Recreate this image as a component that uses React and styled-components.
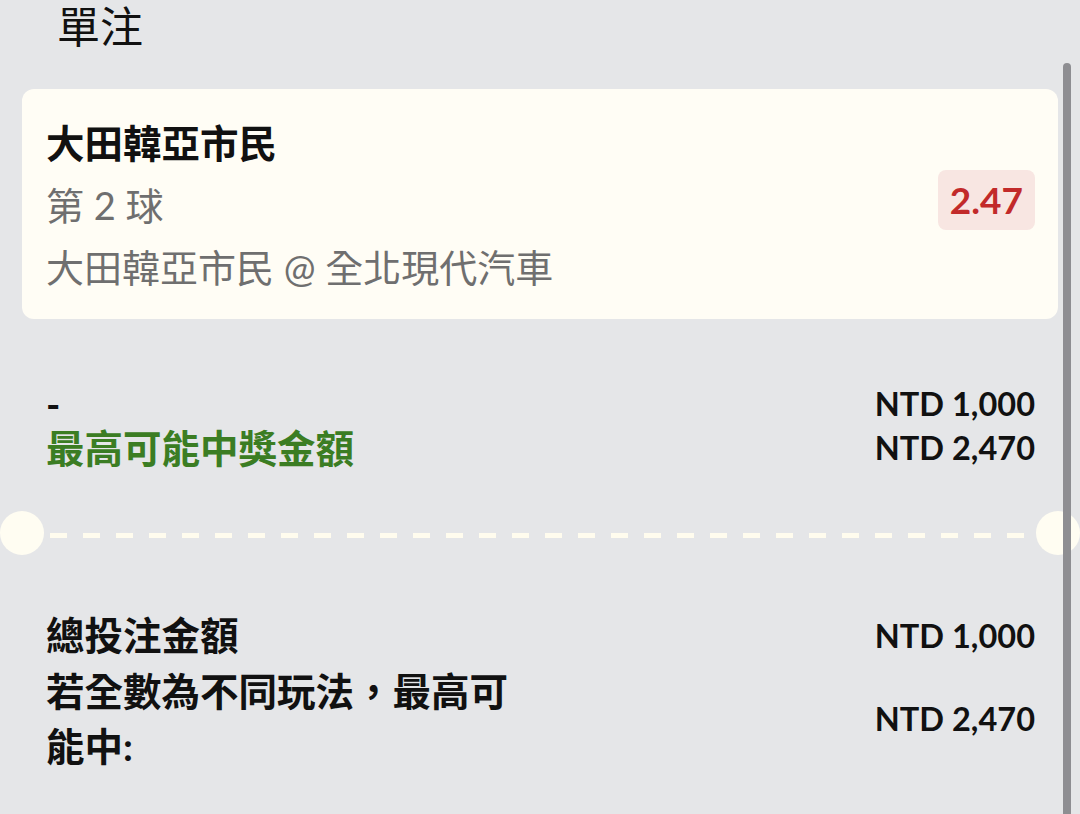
import React from "react";
import styled, { createGlobalStyle } from "styled-components";

const Global = createGlobalStyle`
  html, body { margin: 0; padding: 0; background: #e5e6e8; overflow: hidden; }
  body { font-family: Lato, "Noto Sans CJK TC", sans-serif; }
`;

const Page = styled.div`
  position: relative;
  width: 1080px;
  height: 814px;
  padding: 0 22px;
  box-sizing: border-box;
  background: #e5e6e8;
  overflow: hidden;
`;

const Title = styled.h1`
  margin: 0;
  padding: 0 0 0 35px;
  height: 89px;
  font-family: "Noto Sans CJK TC", sans-serif;
  font-weight: 400;
  font-size: 43px;
  line-height: 48px;
  color: #111;
`;

const Card = styled.div`
  background: #fffdf5;
  border-radius: 12px;
  padding: 23px 23px 21px 24px;
  display: flex;
  align-items: center;
  justify-content: space-between;
`;

const Info = styled.div`
  display: flex;
  flex-direction: column;
`;

const Line = styled.div`
  font-family: Lato, "Noto Sans CJK TC", sans-serif;
  font-size: ${(p) => (p.$bold ? "38.5px" : "38px")};
  line-height: 62px;
  font-weight: ${(p) => (p.$bold ? 700 : 400)};
  color: ${(p) => (p.$muted ? "#6f6f6f" : "#111")};
  white-space: nowrap;
`;

const Odds = styled.div`
  background: #f8e6e2;
  color: #c22a2a;
  border-radius: 8px;
  padding: 0 12px;
  height: 60px;
  display: flex;
  align-items: center;
  font-family: Lato, sans-serif;
  font-weight: 700;
  font-size: 37px;
  margin-bottom: 11px;
`;

const Summary = styled.div`
  display: grid;
  grid-template-columns: 1fr auto;
  align-items: center;
  padding: ${(p) => p.$pad};
  margin: 0 23px 0 24px;
  line-height: ${(p) => p.$lh}px;
`;

const Label = styled.div`
  font-family: Lato, "Noto Sans CJK TC", sans-serif;
  font-size: 38.5px;
  font-weight: 700;
  color: ${(p) => (p.$green ? "#3b7d23" : "#111")};
  max-width: ${(p) => (p.$wrap ? "480px" : "none")};
`;

const Amount = styled.div`
  font-family: Lato, sans-serif;
  font-size: 32.5px;
  font-weight: 700;
  color: #111;
  text-align: right;
  white-space: nowrap;
`;

const Divider = styled.div`
  position: relative;
  height: 44px;
  margin: 41px 0 0;
  &::before,
  &::after {
    content: "";
    position: absolute;
    top: 0;
    width: 44px;
    height: 44px;
    border-radius: 50%;
    background: #fffdf2;
  }
  &::before { left: -22px; }
  &::after { right: -22px; }
`;

const Dashes = styled.div`
  position: absolute;
  left: 28px;
  right: 6px;
  top: 22px;
  height: 5px;
  background: repeating-linear-gradient(
    to right,
    #fffcee 0 17px,
    transparent 17px 33px
  );
`;

const Scrollbar = styled.div`
  position: absolute;
  right: 9px;
  top: 63px;
  bottom: -10px;
  width: 8px;
  border-radius: 4px;
  background: #8e8e92;
`;

export default function App() {
  return (
    <>
      <Global />
      <Page>
        <Title>單注</Title>
        <Card>
          <Info>
            <Line $bold>大田韓亞市民</Line>
            <Line $muted>第 2 球</Line>
            <Line $muted>大田韓亞市民 @ 全北現代汽車</Line>
          </Info>
          <Odds>2.47</Odds>
        </Card>
        <Summary $pad="63px 0 0" $lh={44}>
          <Label>-</Label>
          <Amount>NTD 1,000</Amount>
          <Label $green>最高可能中獎金額</Label>
          <Amount>NTD 2,470</Amount>
        </Summary>
        <Divider>
          <Dashes />
        </Divider>
        <Summary $pad="53px 0 0" $lh={55.5}>
          <Label>總投注金額</Label>
          <Amount>NTD 1,000</Amount>
          <Label $wrap>若全數為不同玩法，最高可能中:</Label>
          <Amount>NTD 2,470</Amount>
        </Summary>
        <Scrollbar />
      </Page>
    </>
  );
}
